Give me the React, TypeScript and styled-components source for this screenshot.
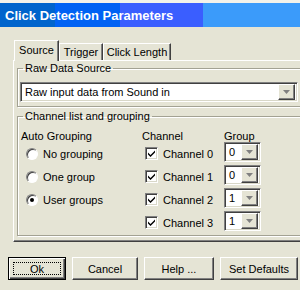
import styled, { createGlobalStyle, css } from 'styled-components';
import { Fragment } from 'react';

const GlobalStyle = createGlobalStyle`
  html, body {
    margin: 0;
    padding: 0;
    width: 300px;
    height: 290px;
    overflow: hidden;
    background: #e5e4d5;
  }
  * {
    box-sizing: border-box;
  }
`;

const UI_FONT = `'Liberation Sans', Arial, sans-serif`;

const raised = css`
  border: 1px solid;
  border-color: #ffffff #404040 #404040 #ffffff;
  box-shadow: inset -1px -1px 0 #808080;
  background: #e5e4d5;
`;

const sunken = css`
  border: 1px solid;
  border-color: #808080 #ffffff #ffffff #808080;
  box-shadow: inset 1px 1px 0 #404040, inset -1px -1px 0 #d8d7c8;
  background: #ffffff;
`;

const Window = styled.div`
  width: 312px;
  height: 290px;
  display: flex;
  flex-direction: column;
  background: #e5e4d5;
  border-top: 3px solid #f3f2ea;
  font-family: ${UI_FONT};
  font-size: 11px;
  color: #000;
`;

const TitleBar = styled.div`
  height: 24px;
  display: flex;
  align-items: center;
  padding-left: 5px;
  color: #fff;
  font-family: 'Liberation Sans', Arial, sans-serif;
  font-weight: bold;
  font-size: 13px;
  background: linear-gradient(
    to right,
    #0064cc 0 55px,
    #0062f4 55px 120px,
    #3a5eff 120px 203px,
    #3b9bfa 203px
  );
`;

const TabArea = styled.div`
  display: flex;
  flex-direction: column;
  padding: 13px 6px 0 13px;
`;

const TabStrip = styled.div`
  display: flex;
  align-items: flex-end;
  height: 20px;
  padding-left: 1px;
  position: relative;
  z-index: 1;
`;

const Tab = styled.div<{ $active?: boolean; $width: number }>`
  width: ${(p) => p.$width}px;
  height: ${(p) => (p.$active ? '21px' : '17px')};
  margin-bottom: ${(p) => (p.$active ? '-1px' : '0')};
  padding-bottom: ${(p) => (p.$active ? '3px' : '0')};
  display: flex;
  align-items: center;
  justify-content: center;
  border: 1px solid;
  border-bottom: none;
  border-color: #ffffff #404040 transparent #ffffff;
  box-shadow: inset -1px 0 0 #808080;
  background: #e5e4d5;
  white-space: nowrap;
`;

const Panel = styled.div`
  border: 1px solid;
  border-color: #ffffff #404040 #404040 #ffffff;
  box-shadow: inset -1px -1px 0 #808080;
  padding: 0 4px 5px 3px;
  display: flex;
  flex-direction: column;
  gap: 3px;
`;

const GroupBox = styled.fieldset`
  margin: 0;
  padding: 0 2px 4px 2px;
  border: 1px solid #a3a293;
  box-shadow: inset 1px 1px 0 #ffffff, 1px 1px 0 #ffffff;
  min-width: 0;
`;

const RawSourceBox = styled(GroupBox)`
  padding-top: 7px;
  margin-top: 1px;
`;

const Legend = styled.legend`
  margin-left: 3px;
  padding: 0 2px;
  line-height: 13px;
`;

const Select = styled.div<{ $width?: number }>`
  ${sunken};
  height: 20px;
  width: ${(p) => (p.$width ? `${p.$width}px` : 'auto')};
  display: flex;
  align-items: center;
  padding: 2px;
`;

const SelectValue = styled.span`
  flex: 1;
  padding-left: 2px;
  white-space: nowrap;
`;

const DropButton = styled.span`
  ${raised};
  width: 17px;
  height: 16px;
  display: flex;
  align-items: center;
  justify-content: center;
`;

const Arrow = () => (
  <svg width="7" height="4" viewBox="0 0 7 4">
    <path d="M0 0h7L3.5 4z" fill="#808080" />
  </svg>
);

const Dropdown = ({ value, width }: { value: string; width?: number }) => (
  <Select $width={width}>
    <SelectValue>{value}</SelectValue>
    <DropButton>
      <Arrow />
    </DropButton>
  </Select>
);

const GroupingGrid = styled.div`
  display: grid;
  grid-template-columns: 121px 82px 1fr;
  grid-template-rows: 14px repeat(3, 23px) 20px;
  padding: 5px 0 0 1px;
  align-items: start;
`;

const Heading = styled.div`
  line-height: 14px;
  margin-top: 1px;
`;

const OptionRow = styled.label`
  display: flex;
  align-items: center;
  gap: 5px;
  height: 20px;
  padding-top: 3px;
`;

const Radio = styled.span<{ $checked?: boolean }>`
  width: 12px;
  height: 12px;
  border-radius: 50%;
  border: 1px solid;
  border-color: #808080 #ffffff #ffffff #808080;
  box-shadow: inset 1px 1px 0 #404040;
  background: #fff;
  display: flex;
  align-items: center;
  justify-content: center;
  margin-left: 5px;
  &::after {
    content: '';
    width: 4px;
    height: 4px;
    border-radius: 50%;
    background: ${(p) => (p.$checked ? '#000' : 'transparent')};
  }
`;

const Checkbox = styled.span`
  ${sunken};
  width: 13px;
  height: 13px;
  display: flex;
  align-items: center;
  justify-content: center;
  margin-left: 3px;
`;

const Check = () => (
  <svg width="7" height="7" viewBox="0 0 7 7">
    <path d="M0 2.5l2.5 2.5L7 0.5v2L2.5 7 0 4.5z" fill="#000" />
  </svg>
);

const ButtonRow = styled.div`
  display: flex;
  gap: 6px;
  padding: 15px 0 0 8px;
`;

const Button = styled.div<{ $width: number; $default?: boolean }>`
  ${raised};
  width: ${(p) => p.$width}px;
  height: 23px;
  display: flex;
  align-items: center;
  justify-content: center;
  flex-shrink: 0;
  white-space: nowrap;
  ${(p) =>
    p.$default &&
    css`
      border: 1px solid #000;
      box-shadow: inset 1px 1px 0 #ffffff, inset -1px -1px 0 #404040, inset -2px -2px 0 #808080;
    `}
`;

const FocusRing = styled.span`
  display: flex;
  align-items: center;
  justify-content: center;
  width: calc(100% - 8px);
  height: calc(100% - 8px);
  border: 1px dotted #000;
`;

const grouping = [
  { label: 'No grouping', checked: false },
  { label: 'One group', checked: false },
  { label: 'User groups', checked: true },
];

const channels = [
  { name: 'Channel 0', group: '0' },
  { name: 'Channel 1', group: '0' },
  { name: 'Channel 2', group: '1' },
  { name: 'Channel 3', group: '1' },
];

export default function App() {
  return (
    <>
      <GlobalStyle />
      <Window>
        <TitleBar>Click Detection Parameters</TitleBar>
        <TabArea>
          <TabStrip>
            <Tab $active $width={45}>Source</Tab>
            <Tab $width={44}>Trigger</Tab>
            <Tab $width={68}>Click Length</Tab>
          </TabStrip>
          <Panel>
            <RawSourceBox>
              <Legend>Raw Data Source</Legend>
              <Dropdown value="Raw input data from Sound in" />
            </RawSourceBox>
            <GroupBox>
              <Legend>Channel list and grouping</Legend>
              <GroupingGrid>
                <Heading>Auto Grouping</Heading>
                <Heading>Channel</Heading>
                <Heading>Group</Heading>
                {channels.map((ch, i) => (
                  <Fragment key={ch.name}>
                    {grouping[i] ? (
                      <OptionRow>
                        <Radio $checked={grouping[i].checked} />
                        {grouping[i].label}
                      </OptionRow>
                    ) : (
                      <div />
                    )}
                    <OptionRow>
                      <Checkbox>
                        <Check />
                      </Checkbox>
                      {ch.name}
                    </OptionRow>
                    <Dropdown value={ch.group} width={37} />
                  </Fragment>
                ))}
              </GroupingGrid>
            </GroupBox>
          </Panel>
        </TabArea>
        <ButtonRow>
          <Button $width={58} $default>
            <FocusRing>Ok</FocusRing>
          </Button>
          <Button $width={66}>Cancel</Button>
          <Button $width={70}>Help ...</Button>
          <Button $width={78}>Set Defaults</Button>
        </ButtonRow>
      </Window>
    </>
  );
}
